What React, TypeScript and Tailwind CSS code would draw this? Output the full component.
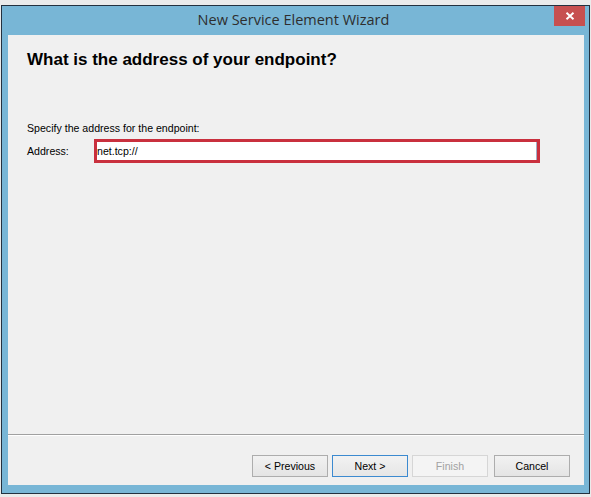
import React from "react";

function Btn({
  children,
  variant = "normal",
}: {
  children: React.ReactNode;
  variant?: "normal" | "default" | "disabled";
}) {
  const cls =
    variant === "default"
      ? "border-[#3c8ad0] bg-gradient-to-b from-[#f2f2f2] to-[#e6e6e6] text-black"
      : variant === "disabled"
      ? "border-[#d6d6d6] bg-[#f4f4f4] text-[#a2a2a2]"
      : "border-[#adadad] bg-gradient-to-b from-[#f2f2f2] to-[#e4e4e4] text-black";
  return (
    <div
      className={`flex h-[22px] w-[76px] items-center justify-center border text-[10.6px] leading-none ${cls}`}
    >
      {children}
    </div>
  );
}

export default function App() {
  return (
    <div
      className="h-[497px] w-[591px] overflow-hidden bg-[#ebebeb] pl-[1px] pt-[5px]"
      style={{ fontFamily: '"Liberation Sans", Arial, sans-serif' }}
    >
      <div className="flex h-[489px] w-[589px] flex-col border border-[#24313f] bg-[#78b6d6]">
        {/* title bar */}
        <div className="grid h-[29px] shrink-0 grid-cols-[1fr_auto_1fr] pr-[4px]">
          <div />
          <div
            className="flex items-center pb-[2px] text-[14.5px] text-[#2e2e2e]"
            style={{ fontFamily: '"Open Sans", "Noto Sans", sans-serif' }}
          >
            New Service Element Wizard
          </div>
          <div className="flex justify-end">
            <div className="flex h-[20px] w-[31px] items-center justify-center bg-[#c75050]">
              <svg width="10" height="8" viewBox="0 0 10 8">
                <path
                  d="M1.5 0.8 L8.5 7.2 M8.5 0.8 L1.5 7.2"
                  stroke="#ffffff"
                  strokeWidth="1.9"
                  strokeLinecap="butt"
                />
              </svg>
            </div>
          </div>
        </div>

        {/* client area */}
        <div className="ml-[6px] mr-[5px] flex h-[450px] flex-col bg-[#f0f0f0]">
          <div className="pl-[19px] pt-[15px]">
            <div className="text-[17px] font-bold leading-[20px] text-black">
              What is the address of your endpoint?
            </div>
            <div className="mt-[52px] text-[10.6px] leading-[13px] text-black">
              Specify the address for the endpoint:
            </div>
            <div className="mt-[4px] flex items-center">
              <div className="w-[67px] text-[10.6px] leading-[13px] text-black">
                Address:
              </div>
              <div className="flex h-[24px] w-[446px] items-center border-[3px] border-[#c9303e] bg-white">
                <div className="flex h-full flex-1 items-center border-r border-[#9fb0c8] text-[10.6px] leading-none text-black">
                  net.tcp://
                </div>
              </div>
            </div>
          </div>

          <div className="flex-1" />

          <div className="h-[1px] bg-[#a0a0a0]" />
          <div className="h-[1px] bg-white" />

          <div className="flex justify-end pb-[8px] pr-[14px] pt-[19px]">
            <Btn>&lt; Previous</Btn>
            <div className="w-[4px]" />
            <Btn variant="default">Next &gt;</Btn>
            <div className="w-[4px]" />
            <Btn variant="disabled">Finish</Btn>
            <div className="w-[6px]" />
            <Btn>Cancel</Btn>
          </div>
        </div>
      </div>
    </div>
  );
}
